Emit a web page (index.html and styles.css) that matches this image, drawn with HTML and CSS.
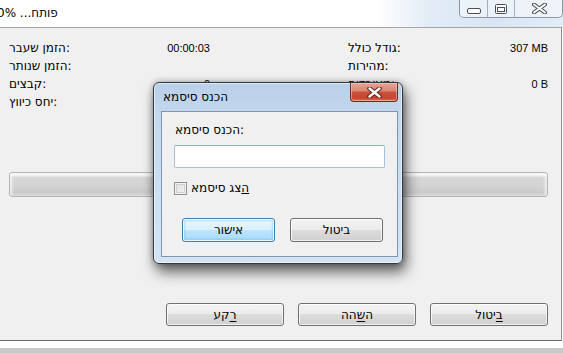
FILE: index.html
```html
<!DOCTYPE html>
<html lang="he">
<head>
    <meta charset="UTF-8">
    <title>פותח... 0%</title>
    <link rel="stylesheet" href="styles.css">
</head>
<body>
<div class="window">
    <div class="titlebar">
        <span class="title">פותח... 0%</span>
        <div class="caption">
            <span class="cap cap-min">
                <svg width="14" height="6" viewBox="0 0 14 6"><rect x="0.5" y="0.5" width="13" height="5" rx="1.5" fill="#fff" stroke="#4a4f55"/></svg>
            </span>
            <span class="cap cap-max">
                <svg width="12" height="10" viewBox="0 0 12 10"><rect x="0.5" y="0.5" width="11" height="9" rx="1" fill="#fff" stroke="#4a4f55"/><rect x="2.5" y="3.5" width="7" height="4" fill="none" stroke="#4a4f55"/></svg>
            </span>
            <span class="cap cap-close">
                <svg width="15" height="11" viewBox="0 0 15 11"><path d="M2 1.5 L13 9.5 M13 1.5 L2 9.5" stroke="#4a4f55" stroke-width="4" stroke-linecap="round"/><path d="M2 1.5 L13 9.5 M13 1.5 L2 9.5" stroke="#fff" stroke-width="2" stroke-linecap="round"/></svg>
            </span>
        </div>
    </div>

    <div class="panel">
        <div class="stats">
            <span class="label">הזמן שעבר:</span><span class="value">00:00:03</span><span></span><span class="label">גודל כולל:</span><span class="value">307 MB</span>
            <span class="label">הזמן שנותר:</span><span class="value"></span><span></span><span class="label">מהירות:</span><span class="value"></span>
            <span class="label">קבצים:</span><span class="value">0</span><span></span><span class="label">מעובדים:</span><span class="value">0 B</span>
            <span class="label">יחס כיווץ:</span><span class="value"></span><span></span><span class="label">גודל דחוס:</span><span class="value"></span>
        </div>

        <div class="progress"></div>

        <div class="actions">
            <button class="btn"><u>ר</u>קע</button>
            <button class="btn">ה<u>ש</u>הה</button>
            <button class="btn"><u>ב</u>יטול</button>
        </div>
    </div>
    <div class="strip"></div>
</div>

<!-- חלון הסיסמא מעל -->
<div class="dialog">
    <div class="dlg-title">הכנס סיסמא</div>
    <span class="dlg-close">
        <svg width="15" height="11" viewBox="0 0 15 11"><path d="M2.5 1.5 L12.5 9.5 M12.5 1.5 L2.5 9.5" stroke="#5a231a" stroke-width="4.5" stroke-linecap="round"/><path d="M2.5 1.5 L12.5 9.5 M12.5 1.5 L2.5 9.5" stroke="#fff" stroke-width="2.4" stroke-linecap="round"/></svg>
    </span>
    <div class="dlg-body">
        <div class="dlg-label">הכנס סיסמא:</div>
        <div class="dlg-input"></div>
        <div class="dlg-check">
            <span class="checkbox"></span>
            <span><u>ה</u>צג סיסמא</span>
        </div>
        <div class="dlg-buttons">
            <button class="btn btn-default">אישור</button>
            <button class="btn">ביטול</button>
        </div>
    </div>
</div>
</body>
</html>
```

FILE: styles.css
```css
* {
    margin: 0;
    padding: 0;
    box-sizing: border-box;
}
body {
    width: 563px;
    height: 353px;
    overflow: hidden;
    position: relative;
    background: #fff;
    font: 12px "DejaVu Sans", sans-serif;
    color: #000;
}

/* חלון ראשי */
.titlebar {
    height: 27px;
    display: flex;
    align-items: flex-start;
    background: linear-gradient(to right, #fff 0, #fff 67%, #e3ecf6 76%, #d9e5f2 88%, #e4edf6 100%);
}
.title {
    margin-left: -3px;
    line-height: 27px;
    font-size: 12px;
}
.caption {
    margin-left: auto;
    width: 104px;
    height: 18px;
    display: flex;
    border: 1px solid #8b98a7;
    border-top: none;
    border-radius: 0 0 5px 5px;
    background: rgba(255, 255, 255, 0.45);
}
.cap {
    display: flex;
    align-items: center;
    justify-content: center;
    height: 100%;
}
.cap-min {
    width: 28px;
    border-right: 1px solid #a4afbb;
    padding-top: 4px;
}
.cap-max {
    width: 27px;
    border-right: 1px solid #a4afbb;
}
.cap-close {
    width: 47px;
    justify-content: flex-start;
    padding-left: 17px;
}

.panel {
    width: 562px;
    height: 314px;
    background: #f0f0f0;
    border-top: 1px solid #a5a5a5;
    border-right: 1px solid #8e8e8e;
    border-bottom: 1px solid #6e6e6e;
    padding: 11px 13px 0 9px;
}
.stats {
    display: grid;
    grid-template-columns: 141px 60px 138px 140px 60px;
    grid-auto-rows: 18px;
    line-height: 18px;
}
.value {
    text-align: right;
    font: 11px "Liberation Sans", sans-serif;
    line-height: 18px;
}
.progress {
    margin-top: 61px;
    height: 25px;
    border: 1px solid #b4b4b4;
    border-radius: 3px;
    background:
        linear-gradient(to right, rgba(255,255,255,0.7), rgba(255,255,255,0) 4px, rgba(255,255,255,0) calc(100% - 4px), rgba(255,255,255,0.7)),
        linear-gradient(#f6f6f6 0, #f2f2f2 3px, #d8d8d8 4px, #d2d2d2 60%, #cbcbcb 85%, #dcdcdc 100%);
}
.actions {
    margin-top: 106px;
    display: flex;
    justify-content: flex-end;
    gap: 14px;
}
.actions .btn {
    width: 118px;
}
.btn {
    height: 23px;
    border: 1px solid #707070;
    border-radius: 3px;
    background: linear-gradient(#f3f3f3 0, #ebebeb 50%, #dddddd 50%, #cfcfcf 100%);
    box-shadow: inset 0 0 0 1px rgba(255, 255, 255, 0.7);
    font: 12px "DejaVu Sans", sans-serif;
    color: #000;
}
.btn u {
    text-underline-offset: 2px;
}
.strip {
    height: 7px;
    background: #fff;
    border-bottom: 6px solid #c9c9c9;
    box-sizing: content-box;
}

/* דיאלוג */
.dialog {
    position: absolute;
    left: 153px;
    top: 82px;
    width: 250px;
    height: 182px;
    border: 1px solid #303a46;
    border-radius: 6px;
    background: linear-gradient(#b9d0e9 0, #c5d9ee 20%, #cddff1 60%, #d5e4f4 100%);
    box-shadow: inset 0 0 0 1px rgba(255, 255, 255, 0.55), 3px 8px 14px rgba(0, 0, 0, 0.6), 0 0 6px rgba(0, 0, 0, 0.3);
    padding: 28px 4px 6px 7px;
    display: flex;
    flex-direction: column;
}
.dlg-title {
    position: absolute;
    left: 9px;
    top: 6px;
    font-size: 12px;
    line-height: 17px;
}
.dlg-close {
    position: absolute;
    right: 4px;
    top: 0;
    width: 48px;
    height: 19px;
    display: flex;
    align-items: center;
    justify-content: center;
    border: 1px solid #6b2a20;
    border-top: none;
    border-radius: 0 0 4px 4px;
    background: linear-gradient(#e6a595 0, #d88673 45%, #c5513c 50%, #c8462f 85%, #dc7d5e 100%);
    box-shadow: inset 0 0 0 1px rgba(255, 210, 200, 0.5);
}
.dlg-body {
    flex: 1;
    border: 1px solid #7f96ae;
    background: #f0f0f0;
    padding: 11px 12px 0 12px;
}
.dlg-label {
    line-height: 14px;
    padding-left: 1px;
}
.dlg-input {
    margin-top: 8px;
    width: 211px;
    height: 23px;
    background: #fff;
    border: 1px solid #a7c0dc;
    border-top-color: #8fadd0;
    border-radius: 2px;
}
.dlg-check {
    margin-top: 13px;
    display: flex;
    align-items: center;
    gap: 4px;
    line-height: 14px;
}
.checkbox {
    width: 13px;
    height: 13px;
    border: 1px solid #8e8f8f;
    background: linear-gradient(135deg, #dcdcdc, #f6f6f6);
    box-shadow: inset 0 0 0 1px #f4f4f4, inset 0 0 0 2px #cfcfcf;
}
.dlg-buttons {
    margin-top: 23px;
    padding-left: 8px;
    display: flex;
    gap: 15px;
}
.dlg-buttons .btn {
    width: 93px;
    height: 24px;
}
.btn-default {
    border-color: #3c7fb1;
    background: linear-gradient(#eaf6fd 0, #d9f0fc 50%, #bee6fd 50%, #a7d9f5 100%);
    box-shadow: inset 0 0 0 1px rgba(255, 255, 255, 0.8), inset 0 0 2px 2px rgba(72, 180, 240, 0.35);
}
```
